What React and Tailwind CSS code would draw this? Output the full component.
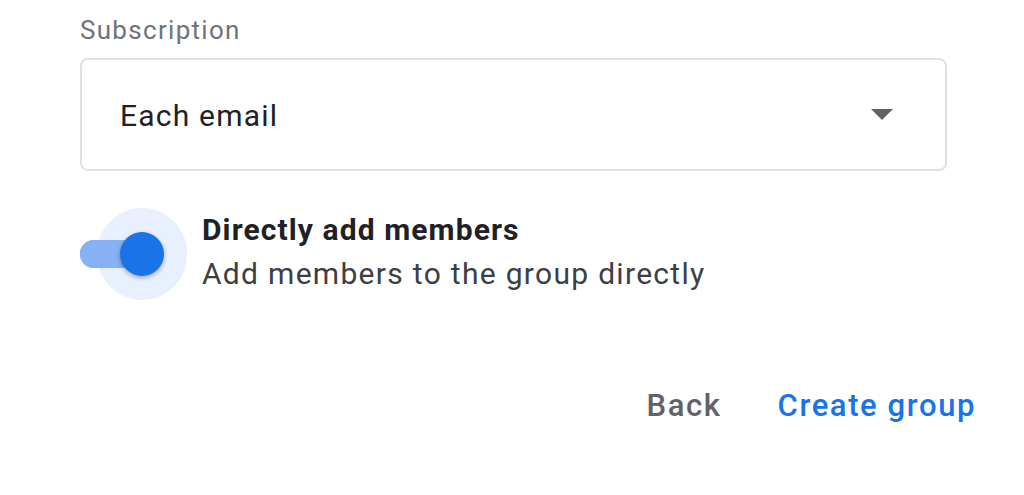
import React, { useState } from "react";

export default function App() {
  const [on, setOn] = useState(true);

  return (
    <div className="w-[1024px] h-[495px] bg-white overflow-hidden font-['Roboto',sans-serif]">
      <div className="pl-[80px] pr-[77px] pt-[13px]">
        <label className="block text-[26px] leading-[34px] text-[#6f7378] tracking-[1.3px]">Subscription</label>

        <div className="mt-[11px] h-[113px] border-2 border-[#dfe1e5] rounded-[8px] flex items-center justify-between pl-[38px] pr-[52px]">
          <span className="text-[30px] text-[#202124] tracking-[1.2px] pt-[2px]">Each email</span>
          <svg width="22" height="11" viewBox="0 0 22 11">
            <path d="M0 0 L22 0 L11 11 Z" fill="#5f6368" />
          </svg>
        </div>

        <div className="mt-[37px] flex items-center">
          <button onClick={() => setOn(!on)} className="relative w-[110px] h-[92px] shrink-0">
            <span className="absolute left-0 top-[32px] w-[70px] h-[28px] rounded-full bg-[#86b2f5]" />
            <span className="absolute left-[17px] top-0 w-[90px] h-[92px] rounded-full bg-[#e8f0fe]" />
            <span className="absolute left-0 top-[32px] w-[60px] h-[28px] rounded-l-full bg-[#86b2f5]" />
            <span className="absolute left-[40px] top-[24px] w-[44px] h-[44px] rounded-full bg-[#1a73e8] shadow-[0_2px_4px_rgba(0,0,0,0.3)]" />
          </button>
          <div className="ml-[12px] pt-[2px]">
            <div className="text-[30px] leading-[38px] font-bold text-[#202124] tracking-[1.1px]">Directly add members</div>
            <div className="text-[30px] leading-[50px] text-[#3c4043] tracking-[1.3px]">Add members to the group directly</div>
          </div>
        </div>
      </div>

      <div className="mt-[83px] flex justify-end items-center pr-[48px] gap-[56px]">
        <button className="text-[31px] font-medium text-[#5f6368] tracking-[1.6px]">Back</button>
        <button className="text-[31px] font-medium text-[#1a73e8] tracking-[1.6px]">Create group</button>
      </div>
    </div>
  );
}
